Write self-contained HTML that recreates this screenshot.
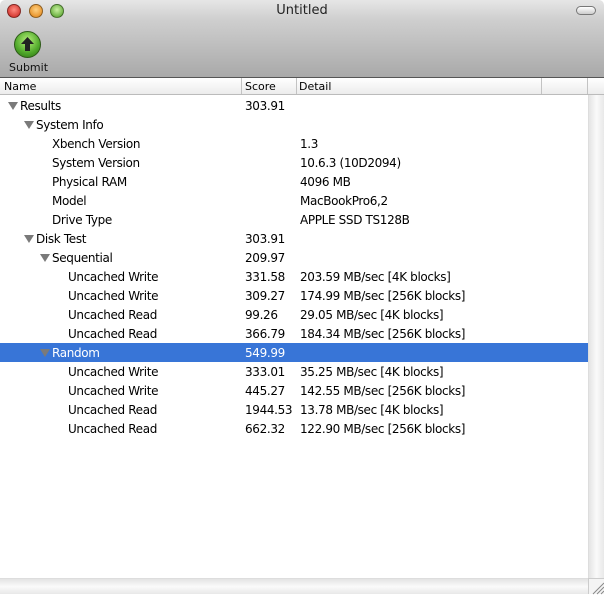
<!DOCTYPE html>
<html><head><style>
*{margin:0;padding:0;box-sizing:border-box}
body{width:604px;height:594px;overflow:hidden;font-family:"DejaVu Sans","Liberation Sans",sans-serif;font-size:12px;background:#fff;position:relative}
#top{position:absolute;left:0;top:0;width:604px;height:78px;background:linear-gradient(#e6e6e6,#cfcfcf 25%,#a9a9a9);border-bottom:1px solid #555;border-radius:5px 5px 0 0}
.tl{position:absolute;top:4px;width:14px;height:14px;border-radius:50%;border:1px solid rgba(0,0,0,.4)}
#title{position:absolute;top:3px;left:0;width:604px;text-align:center;font-size:13px;color:#222}
#pill{position:absolute;left:576px;top:6px;width:20px;height:9px;border:1px solid #777;border-radius:5px;background:linear-gradient(#fff,#ccc)}
#btn{position:absolute;left:14px;top:31px;width:27px;height:27px;border-radius:50%;background:radial-gradient(circle at 50% 35%,#b6f07a,#4fa82a 60%,#2c6e12);border:1px solid #2d5a18}
#sub{position:absolute;left:9px;top:61px;font-size:11px;color:#111}
#hdr{position:absolute;left:0;top:78px;width:604px;height:17px;background:linear-gradient(#fff,#ececec);border-bottom:1px solid #bbb;font-size:11px}
#hdr span{position:absolute;top:2px}
.vd{position:absolute;top:0;height:16px;width:1px;background:#c3c3c3}
.row{position:absolute;left:0;width:588px;height:19px;line-height:19px;color:#000;letter-spacing:-0.35px}
.row span{position:absolute;top:1px;white-space:nowrap}
.tri{width:0;height:0;border-left:5px solid transparent;border-right:5px solid transparent;border-top:8px solid #7a7a7a;top:6px!important}
.sel{background:#3875d7;color:#fff}
#vs{position:absolute;left:588px;top:95px;width:16px;height:483px;background:linear-gradient(90deg,#e4e4e4,#fafafa 50%,#e8e8e8);border-left:1px solid #ddd}
#hs{position:absolute;left:0;top:578px;width:588px;height:16px;background:linear-gradient(#e4e4e4,#fafafa 50%,#e8e8e8);border-top:1px solid #ddd}
#cr{position:absolute;left:588px;top:578px;width:16px;height:16px;background:#f4f4f4;border-top:1px solid #ccc;border-left:1px solid #ccc}
</style></head><body>
<div id="top">
<div class="tl" style="left:7px;background:radial-gradient(circle at 50% 40%,#ff8a80,#c8201a)"></div>
<div class="tl" style="left:29px;background:radial-gradient(circle at 50% 40%,#ffd080,#e08010)"></div>
<div class="tl" style="left:50px;background:radial-gradient(circle at 50% 40%,#c8f0a0,#4a9a20)"></div>
<div id="title">Untitled</div>
<div id="pill"></div>
<div id="btn"><svg width="27" height="27" viewBox="0 0 27 27" style="position:absolute;left:-1px;top:-1px"><path d="M13.5 6 L20 13 H16 V20 H11 V13 H7 Z" fill="#222"/></svg></div>
<div id="sub">Submit</div>
</div>
<div id="hdr">
<span style="left:4px">Name</span><div class="vd" style="left:241px"></div>
<span style="left:245px">Score</span><div class="vd" style="left:296px"></div>
<span style="left:299px">Detail</span><div class="vd" style="left:541px"></div><div class="vd" style="left:587px"></div>
</div>
<div class="row" style="top:96px"><span class="tri" style="left:8px"></span><span style="left:20px">Results</span><span style="left:245px">303.91</span></div>
<div class="row" style="top:115px"><span class="tri" style="left:24px"></span><span style="left:36px">System Info</span></div>
<div class="row" style="top:134px"><span style="left:52px">Xbench Version</span><span style="left:300px">1.3</span></div>
<div class="row" style="top:153px"><span style="left:52px">System Version</span><span style="left:300px">10.6.3 (10D2094)</span></div>
<div class="row" style="top:172px"><span style="left:52px">Physical RAM</span><span style="left:300px">4096 MB</span></div>
<div class="row" style="top:191px"><span style="left:52px">Model</span><span style="left:300px">MacBookPro6,2</span></div>
<div class="row" style="top:210px"><span style="left:52px">Drive Type</span><span style="left:300px">APPLE SSD TS128B</span></div>
<div class="row" style="top:229px"><span class="tri" style="left:24px"></span><span style="left:36px">Disk Test</span><span style="left:245px">303.91</span></div>
<div class="row" style="top:248px"><span class="tri" style="left:40px"></span><span style="left:52px">Sequential</span><span style="left:245px">209.97</span></div>
<div class="row" style="top:267px"><span style="left:68px">Uncached Write</span><span style="left:245px">331.58</span><span style="left:300px">203.59 MB/sec [4K blocks]</span></div>
<div class="row" style="top:286px"><span style="left:68px">Uncached Write</span><span style="left:245px">309.27</span><span style="left:300px">174.99 MB/sec [256K blocks]</span></div>
<div class="row" style="top:305px"><span style="left:68px">Uncached Read</span><span style="left:245px">99.26</span><span style="left:300px">29.05 MB/sec [4K blocks]</span></div>
<div class="row" style="top:324px"><span style="left:68px">Uncached Read</span><span style="left:245px">366.79</span><span style="left:300px">184.34 MB/sec [256K blocks]</span></div>
<div class="row sel" style="top:343px"><span class="tri" style="left:40px"></span><span style="left:52px">Random</span><span style="left:245px">549.99</span></div>
<div class="row" style="top:362px"><span style="left:68px">Uncached Write</span><span style="left:245px">333.01</span><span style="left:300px">35.25 MB/sec [4K blocks]</span></div>
<div class="row" style="top:381px"><span style="left:68px">Uncached Write</span><span style="left:245px">445.27</span><span style="left:300px">142.55 MB/sec [256K blocks]</span></div>
<div class="row" style="top:400px"><span style="left:68px">Uncached Read</span><span style="left:245px;width:52px;overflow:hidden">1944.53</span><span style="left:300px">13.78 MB/sec [4K blocks]</span></div>
<div class="row" style="top:419px"><span style="left:68px">Uncached Read</span><span style="left:245px">662.32</span><span style="left:300px">122.90 MB/sec [256K blocks]</span></div>
<div id="vs"></div><div id="hs"></div>
<div id="cr"><svg width="16" height="16"><path d="M4 15L15 4M8 15L15 8M12 15L15 12" stroke="#888" stroke-width="1"/></svg></div>
</body></html>
